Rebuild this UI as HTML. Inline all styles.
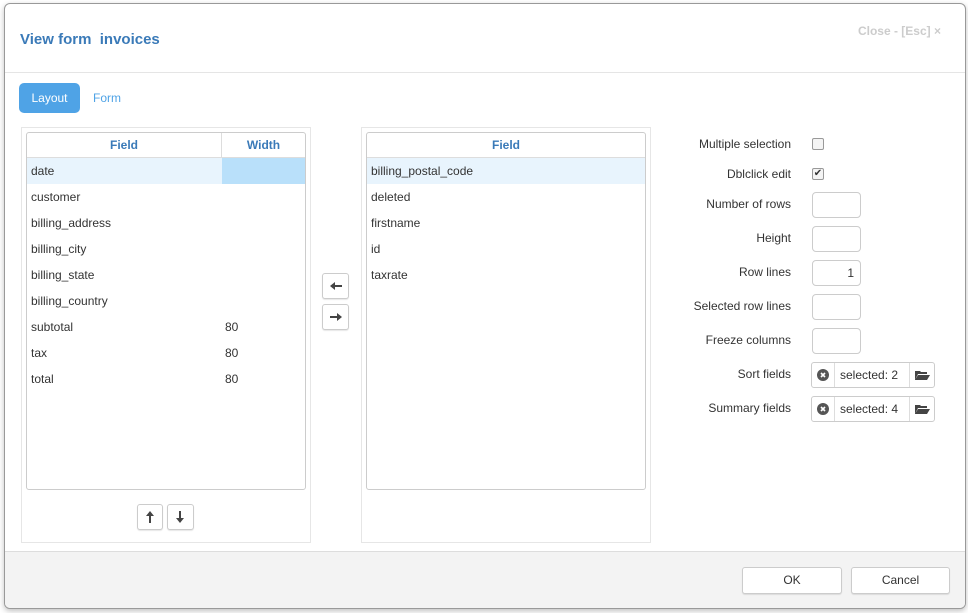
<!DOCTYPE html>
<html><head><style>
*{box-sizing:border-box}
body{margin:0;width:968px;height:613px;background:#fff;font-family:"Liberation Sans",sans-serif;font-size:13px;color:#333;position:relative;overflow:hidden}
.modal{position:absolute;left:4px;top:3px;width:962px;height:606px;border:1px solid #999;border-radius:6px;background:#fff;overflow:hidden;box-shadow:0 2px 6px rgba(0,0,0,.25)}
.abs{position:absolute}
.title{left:15px;top:27px;font-size:15px;font-weight:bold;color:#3a7ab8}
.close{right:24px;top:20px;font-size:12px;color:#ccc;font-weight:bold}
.hr{left:0;right:0;top:68px;height:1px;background:#e5e5e5}
.tab{left:14px;top:79px;width:61px;height:30px;border-radius:5px;background:#4fa3e6;color:#fff;text-align:center;line-height:30px;font-size:12px}
.tab2{left:88px;top:87px;color:#4fa3e6;font-size:12px}
.panel{border:1px solid #e6e6e6}
.tbl{border:1px solid #ccc;border-radius:3px;overflow:hidden}
.th{height:25px;border-bottom:1px solid #ddd;color:#3a7ab8;font-weight:bold;font-size:12px;line-height:24px;text-align:center}
.row{height:26px;line-height:26px;padding-left:4px;font-size:12px;position:relative}
.btn{border:1px solid #ccc;border-radius:3px;background:#fff;box-shadow:0 1px 1px rgba(0,0,0,.1)}
.lbl{width:200px;text-align:right;font-size:12px;color:#333}
.inp{border:1px solid #ccc;border-radius:4px;width:49px;height:26px;font-size:12px;text-align:right;padding-right:6px;line-height:24px}
.foot{left:0;right:0;top:547px;bottom:0;background:#f3f3f3;border-top:1px solid #ddd}
</style></head><body>
<div class="modal">
<div class="abs title">View form&nbsp; invoices</div>
<div class="abs close">Close - [Esc] ×</div>
<div class="abs hr"></div>
<div class="abs tab">Layout</div>
<div class="abs tab2">Form</div>

<div class="abs panel" style="left:16px;top:123px;width:290px;height:416px"></div>
<div class="abs tbl" style="left:21px;top:128px;width:280px;height:358px">
 <div class="th" style="display:flex"><div style="width:195px;border-right:1px solid #ddd">Field</div><div style="flex:1">Width</div></div>
 <div class="row" style="background:#e8f4fd">date<div class="abs" style="left:195px;top:0;width:85px;height:26px;background:#b9e0fa"></div></div>
 <div class="row">customer</div><div class="row">billing_address</div><div class="row">billing_city</div><div class="row">billing_state</div><div class="row">billing_country</div>
 <div class="row">subtotal<span class="abs" style="left:198px">80</span></div>
 <div class="row">tax<span class="abs" style="left:198px">80</span></div>
 <div class="row">total<span class="abs" style="left:198px">80</span></div>
</div>
<div class="abs btn" style="left:132px;top:500px;width:26px;height:26px"><svg width="24" height="24"><path d="M12 6l-4 5h3v7h2v-7h3z" fill="#444"/></svg></div>
<div class="abs btn" style="left:162px;top:500px;width:27px;height:26px"><svg width="24" height="24"><path d="M12 18l-4-5h3V6h2v7h3z" fill="#444"/></svg></div>

<div class="abs btn" style="left:317px;top:269px;width:27px;height:26px"><svg width="25" height="24"><path d="M7 12l5-4v3h7v2h-7v3z" fill="#444"/></svg></div>
<div class="abs btn" style="left:317px;top:300px;width:27px;height:26px"><svg width="25" height="24"><path d="M19 12l-5-4v3H7v2h7v3z" fill="#444"/></svg></div>

<div class="abs panel" style="left:356px;top:123px;width:290px;height:416px"></div>
<div class="abs tbl" style="left:361px;top:128px;width:280px;height:358px">
 <div class="th">Field</div>
 <div class="row" style="background:#e8f4fd">billing_postal_code</div>
 <div class="row">deleted</div><div class="row">firstname</div><div class="row">id</div><div class="row">taxrate</div>
</div>

<div class="abs lbl" style="left:586px;top:133px">Multiple selection</div>
<div class="abs" style="left:807px;top:134px;width:12px;height:12px;border:1px solid #999;border-radius:2px;background:#f4f4f4"></div>
<div class="abs lbl" style="left:586px;top:163px">Dblclick edit</div>
<div class="abs" style="left:807px;top:164px;width:12px;height:12px;border:1px solid #999;border-radius:2px;background:#f4f4f4;font-size:10px;line-height:10px;text-align:center">✔</div>
<div class="abs lbl" style="left:586px;top:193px">Number of rows</div><div class="abs inp" style="left:807px;top:188px"></div>
<div class="abs lbl" style="left:586px;top:227px">Height</div><div class="abs inp" style="left:807px;top:222px"></div>
<div class="abs lbl" style="left:586px;top:261px">Row lines</div><div class="abs inp" style="left:807px;top:256px">1</div>
<div class="abs lbl" style="left:586px;top:295px">Selected row lines</div><div class="abs inp" style="left:807px;top:290px"></div>
<div class="abs lbl" style="left:586px;top:329px">Freeze columns</div><div class="abs inp" style="left:807px;top:324px"></div>
<div class="abs lbl" style="left:586px;top:363px">Sort fields</div>
<div class="abs lbl" style="left:586px;top:397px">Summary fields</div>
<div class="abs" style="left:806px;top:358px;width:124px;height:26px;border:1px solid #ccc;border-radius:3px;display:flex;font-size:12px;line-height:24px"><div style="width:23px;border-right:1px solid #ddd;text-align:center"><svg width="12" height="12" style="margin-top:6px"><circle cx="6" cy="6" r="6" fill="#555"/><path d="M4 4l4 4M8 4l-4 4" stroke="#fff" stroke-width="1.6"/></svg></div><div style="width:75px;border-right:1px solid #ddd;padding-left:5px">selected: 2</div><div style="flex:1;text-align:center"><svg width="16" height="12" style="margin-top:6px"><path d="M1 2h5l1 1h6v2H4L1 11z M4 6h12l-3 5H1z" fill="#444"/></svg></div></div>
<div class="abs" style="left:806px;top:392px;width:124px;height:26px;border:1px solid #ccc;border-radius:3px;display:flex;font-size:12px;line-height:24px"><div style="width:23px;border-right:1px solid #ddd;text-align:center"><svg width="12" height="12" style="margin-top:6px"><circle cx="6" cy="6" r="6" fill="#555"/><path d="M4 4l4 4M8 4l-4 4" stroke="#fff" stroke-width="1.6"/></svg></div><div style="width:75px;border-right:1px solid #ddd;padding-left:5px">selected: 4</div><div style="flex:1;text-align:center"><svg width="16" height="12" style="margin-top:6px"><path d="M1 2h5l1 1h6v2H4L1 11z M4 6h12l-3 5H1z" fill="#444"/></svg></div></div>

<div class="abs foot"></div>
<div class="abs btn" style="left:737px;top:563px;width:100px;height:27px;text-align:center;line-height:25px;font-size:12px">OK</div>
<div class="abs btn" style="left:846px;top:563px;width:99px;height:27px;text-align:center;line-height:25px;font-size:12px">Cancel</div>
</div>
</body></html>
